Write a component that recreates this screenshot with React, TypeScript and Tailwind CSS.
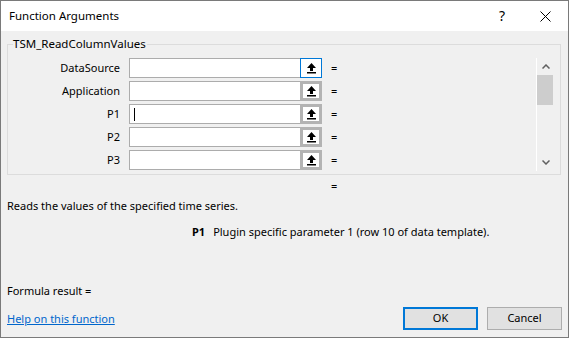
import React from 'react';

const params = ['DataSource', 'Application', 'P1', 'P2', 'P3'];

function RefArrow() {
  return (
    <svg width="9" height="11" viewBox="0 0 9 11">
      <polygon points="4.5,0 9,5 6,5 6,8 3,8 3,5 0,5" fill="#000" />
      <rect x="0" y="9" width="9" height="1.5" fill="#000" />
    </svg>
  );
}

function ArgRow({ name, index }: { name: string; index: number }) {
  const focused = index === 0;
  return (
    <div className="flex items-center h-[20px]">
      <div className="w-[112px] text-right leading-[16px]">{name}</div>
      <div className="ml-[9px] w-[193px] h-[20px] flex">
        <div className="flex-1 h-full bg-white border border-r-0 border-[#acacac] flex items-center pl-[4px]">
          {index === 2 && <div className="w-px h-[13px] bg-black" />}
        </div>
        <div
          className={
            focused
              ? 'w-[22px] h-full border border-[#0078d7] bg-white flex items-center justify-center'
              : 'w-[22px] h-full border-[3px] border-[#b3b3b3] bg-white flex items-center justify-center'
          }
        >
          <RefArrow />
        </div>
      </div>
      <div className="ml-[9px] leading-[16px]">=</div>
    </div>
  );
}

export default function App() {
  return (
    <div className="w-[569px] h-[338px] border border-[#7a7a7a] flex flex-col bg-[#f0f0f0] font-['Noto_Sans',sans-serif] text-[11px] text-black">
      {/* Title bar */}
      <div className="h-[30px] bg-white flex items-center pl-[8px] shrink-0">
        <span className="text-[11.5px]">Function Arguments</span>
        <span className="ml-auto text-[14px] leading-none">?</span>
        <svg className="ml-[35px] mr-[17px]" width="11" height="11" viewBox="0 0 11 11">
          <path d="M0.5 0.5 L10.5 10.5 M10.5 0.5 L0.5 10.5" stroke="#000" strokeWidth="1" />
        </svg>
      </div>

      {/* Body */}
      <div className="flex-1 flex flex-col px-[6px]">
        <div className="relative mt-[13px] w-[554px] h-[131px] border border-[#dcdcdc] shrink-0">
          <span className="absolute left-[5px] top-[-9px] leading-[16px] bg-[#f0f0f0] pr-[1px] text-[11.5px]">
            TSM_ReadColumnValues
          </span>
          <div className="flex pt-[13px]">
            <div className="flex flex-col gap-[3px]">
              {params.map((p, i) => (
                <ArgRow key={p} name={p} index={i} />
              ))}
            </div>
            <div className="ml-auto mr-[6px] w-[18px] h-[113px] border-l border-white flex flex-col">
              <div className="h-[17px] flex items-center justify-center">
                <svg width="8" height="5" viewBox="0 0 8 5">
                  <path d="M0.5 4.5 L4 1 L7.5 4.5" stroke="#606060" strokeWidth="1.5" fill="none" />
                </svg>
              </div>
              <div className="h-[30px] w-[16px] bg-[#cdcdcd]" />
              <div className="flex-1" />
              <div className="h-[17px] flex items-center justify-center">
                <svg width="8" height="5" viewBox="0 0 8 5">
                  <path d="M0.5 0.5 L4 4 L7.5 0.5" stroke="#606060" strokeWidth="1.5" fill="none" />
                </svg>
              </div>
            </div>
          </div>
        </div>

        <div className="mt-[3px] leading-[16px] pl-[324px]">=</div>
        <div className="mt-[4px] leading-[16px]">Reads the values of the specified time series.</div>
        <div className="mt-[10px] leading-[16px] pl-[185px] flex">
          <span className="font-bold">P1</span>
          <span className="ml-[8px]">Plugin specific parameter 1 (row 10 of data template).</span>
        </div>
        <div className="mt-[43px] leading-[16px]">Formula result =</div>
        <div className="mt-[8px] h-[23px] flex items-center">
          <a href="#" className="text-[#0066cc] underline leading-[16px]">
            Help on this function
          </a>
          <button className="ml-auto w-[75px] h-[23px] border-2 border-[#0078d7] bg-[#e1e1e1]">OK</button>
          <button className="ml-[9px] w-[75px] h-[23px] border border-[#adadad] bg-[#e1e1e1]">Cancel</button>
        </div>
      </div>
    </div>
  );
}
